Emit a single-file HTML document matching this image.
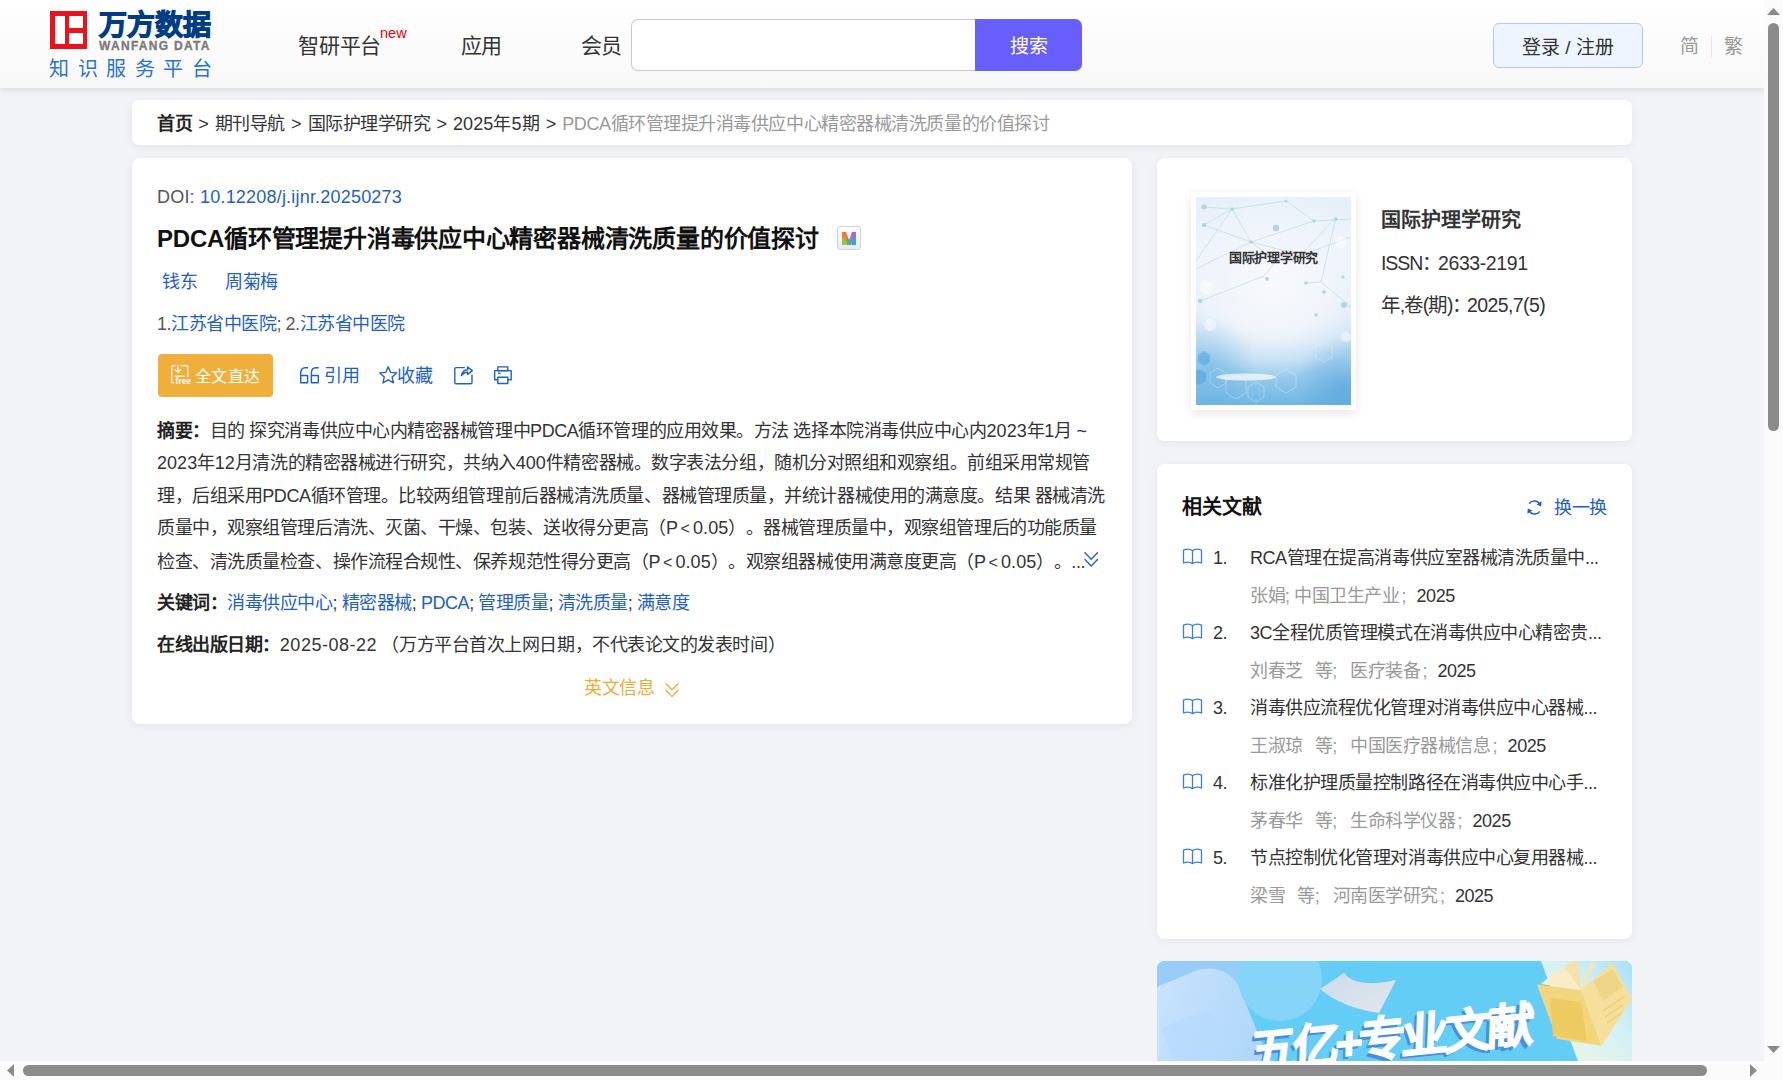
<!DOCTYPE html>
<html lang="zh-CN"><head><meta charset="utf-8">
<style>
*{box-sizing:border-box;margin:0;padding:0}
html,body{text-spacing-trim:space-all;width:1783px;height:1080px;overflow:hidden;background:#f1f3f6;font-family:"Liberation Sans",sans-serif;color:#333}
.abs{position:absolute}
.d{letter-spacing:0.05px}
.sep{display:inline-block;width:22.6px;text-align:center;letter-spacing:0}
.lt{display:inline-block;width:15.5px;text-align:center;letter-spacing:0;font-size:16px}
.nw{white-space:nowrap}
#hdr{position:absolute;left:0;top:0;width:1764px;height:88px;background:linear-gradient(#fff,#f8f8f8);box-shadow:0 2px 6px rgba(0,0,0,.1)}
.card{position:absolute;background:#fff;border-radius:8px;box-shadow:0 2px 10px rgba(20,30,50,.06)}
.blue{color:#1e60c6}
.t18{font-size:18px;line-height:24px;letter-spacing:-0.45px}
</style></head><body>

<!-- header -->
<div id="hdr">
  <!-- logo mark -->
  <div class="abs" style="left:50px;top:11px;width:37px;height:38px;background:#e8141c"></div>
  <div class="abs" style="left:54.5px;top:16px;width:10px;height:28px;background:#fff"></div>
  <div class="abs" style="left:69.3px;top:16px;width:13.4px;height:12px;background:#fff"></div>
  <div class="abs" style="left:69.3px;top:32.5px;width:13.4px;height:11.5px;background:#fff"></div>
  <div class="abs nw" style="left:99px;top:8.5px;font-size:28px;line-height:34px;font-weight:bold;color:#003d86;letter-spacing:0px;-webkit-text-stroke:1.1px #003d86">万方数据</div>
  <div class="abs nw" style="left:99px;top:39.5px;font-size:12px;line-height:13px;font-weight:bold;color:#7b7b7b;letter-spacing:1.3px;-webkit-text-stroke:0.35px #7b7b7b">WANFANG DATA</div>
  <div class="abs nw" style="left:49px;top:56px;font-size:20px;line-height:26px;color:#2a72d8;letter-spacing:8.6px">知识服务平台</div>

  <div class="abs nw" style="left:298px;top:31.5px;font-size:21px;line-height:28px;color:#333;letter-spacing:-0.2px">智研平台</div>
  <div class="abs nw" style="left:380px;top:23.5px;font-size:14.5px;line-height:18px;color:#e60012">new</div>
  <div class="abs nw" style="left:461px;top:31.5px;font-size:21px;line-height:28px;color:#333;letter-spacing:-0.6px">应用</div>
  <div class="abs nw" style="left:581px;top:31.5px;font-size:21px;line-height:28px;color:#333;letter-spacing:-0.6px">会员</div>

  <div class="abs" style="left:631px;top:19px;width:346px;height:52px;background:#fff;border:1px solid #c8c8c8;border-right:none;border-radius:7px 0 0 7px"></div>
  <div class="abs nw" style="left:975px;top:19px;width:107px;height:52px;background:#685efc;border-radius:0 7px 7px 0;color:#fff;font-size:19px;line-height:56px;text-align:center;padding-left:1px">搜索</div>

  <div class="abs nw" style="left:1493px;top:23px;width:150px;height:45px;background:#eef5fe;border:1px solid #b0c8ec;border-radius:6px;color:#333;font-size:19px;line-height:48px;text-align:center">登录 / 注册</div>
  <div class="abs nw" style="left:1680px;top:34px;font-size:19px;line-height:26px;color:#999">简</div>
  <div class="abs" style="left:1711px;top:36px;width:1px;height:21px;background:#e3e3e3"></div>
  <div class="abs nw" style="left:1724px;top:34px;font-size:19px;line-height:26px;color:#999">繁</div>
</div>

<!-- breadcrumb -->
<div class="card" style="left:132px;top:100px;width:1500px;height:45px;border-radius:7px"></div>
<div class="abs nw t18" style="left:157px;top:112px;color:#333"><b style="color:#222">首页</b><span class="sep">&gt;</span>期刊导航<span class="sep">&gt;</span>国际护理学研究<span class="sep">&gt;</span><span style="letter-spacing:0.1px">2025年5期</span><span class="sep">&gt;</span><span style="color:#999">PDCA循环管理提升消毒供应中心精密器械清洗质量的价值探讨</span></div>

<!-- main card -->
<div class="card" style="left:132px;top:158px;width:1000px;height:566px"></div>


<!-- main content -->
<div class="abs nw t18" style="left:157px;top:185px;color:#555;letter-spacing:0.2px">DOI: <span class="blue">10.12208/j.ijnr.20250273</span></div>
<div class="abs nw" style="left:157px;top:223px;font-size:24px;line-height:32px;font-weight:bold;color:#111;letter-spacing:-0.22px">PDCA循环管理提升消毒供应中心精密器械清洗质量的价值探讨</div>
<div class="abs" style="left:837px;top:226px;width:24px;height:24px;border:1px solid #d3d3d3;border-radius:3px;background:linear-gradient(#fbfcff,#e8eff9)"></div>
<svg class="abs" style="left:841px;top:231px" width="16" height="15" viewBox="0 0 16 15">
 <defs>
  <linearGradient id="gl" x1="0" y1="0" x2="0" y2="1"><stop offset="0" stop-color="#ff7410"/><stop offset="0.5" stop-color="#e99030"/><stop offset="0.65" stop-color="#8fcb2c"/><stop offset="1" stop-color="#9ccc30"/></linearGradient>
  <linearGradient id="gm" x1="0" y1="0" x2="0" y2="1"><stop offset="0" stop-color="#f08070"/><stop offset="0.6" stop-color="#9a8a80"/><stop offset="0.7" stop-color="#5aa898"/><stop offset="1" stop-color="#5aa898"/></linearGradient>
  <linearGradient id="gr" x1="0" y1="0" x2="0" y2="1"><stop offset="0" stop-color="#b060d8"/><stop offset="0.45" stop-color="#7c80e0"/><stop offset="0.6" stop-color="#44a0e8"/><stop offset="1" stop-color="#3ea2ea"/></linearGradient>
 </defs>
 <rect x="1" y="1" width="4.2" height="13" fill="url(#gl)"/>
 <path d="M5 1 L8 9 L8 14 L5.6 14 L4.4 5 Z" fill="url(#gm)"/>
 <path d="M8 9 L11 1 L11.6 5 L10.5 14 L8 14 Z" fill="url(#gm)"/>
 <rect x="10.8" y="1" width="4.2" height="13" fill="url(#gr)"/>
</svg>
<div class="abs nw t18 blue" style="left:162px;top:270px">钱东</div>
<div class="abs nw t18 blue" style="left:225px;top:270px">周菊梅</div>
<div class="abs nw t18" style="left:157px;top:312px;color:#555">1.<span class="blue">江苏省中医院</span>; 2.<span class="blue">江苏省中医院</span></div>

<div class="abs" style="left:158px;top:354px;width:115px;height:43px;background:#f0ae3a;border-radius:4px"></div>
<div class="abs nw" style="left:195px;top:364.5px;font-size:16px;line-height:24px;color:#fff;letter-spacing:0.4px">全文直达</div>

<!-- action icons -->
<svg class="abs" style="left:168px;top:362px" width="26" height="26" viewBox="0 0 26 26">
 <g fill="none" stroke="#fff" stroke-width="1.25" stroke-linecap="round" stroke-linejoin="round">
  <path d="M7 3.6 L4.7 3.6 Q3.7 3.6 3.7 4.6 L3.7 19.8 Q3.7 20.8 4.7 20.8 L5.9 20.8"/>
  <path d="M13.2 3.6 L18.8 3.6 Q19.8 3.6 19.8 4.6 L19.8 14.3"/>
  <path d="M9.9 3.4 L9.9 10.2 M6.9 7.5 L9.9 10.4 L12.9 7.5"/>
  <path d="M7.2 14 L16.3 14"/>
 </g>
 <text x="7.6" y="21.9" font-family="Liberation Sans" font-weight="bold" font-size="8.4" fill="#fff">free</text>
</svg>
<svg class="abs" style="left:298px;top:365px" width="24" height="21" viewBox="0 0 24 21">
 <g fill="none" stroke="#1e60c6" stroke-width="1.45" stroke-linejoin="round">
  <path d="M10 2.7 L7 2.7 Q3 2.9 2.7 7.5 L2.7 17.8 L9.6 17.8 L9.6 10.5 L2.7 10.5"/>
  <path d="M20.7 2.7 L17.7 2.7 Q13.7 2.9 13.4 7.5 L13.4 17.8 L20.3 17.8 L20.3 10.5 L13.4 10.5"/>
 </g>
</svg>
<svg class="abs" style="left:377px;top:364px" width="22" height="22" viewBox="0 0 22 22">
 <path d="M11.2 2.8 L13.7 8.4 L19.6 8.9 L15.1 12.9 L16.5 18.9 L11.2 15.8 L5.9 18.9 L7.3 12.9 L2.8 8.9 L8.7 8.4 Z" fill="none" stroke="#1e60c6" stroke-width="1.35" stroke-linejoin="round"/>
</svg>
<svg class="abs" style="left:452px;top:364px" width="23" height="22" viewBox="0 0 23 22">
 <g fill="none" stroke="#1e60c6" stroke-width="1.4" stroke-linejoin="round" stroke-linecap="round">
  <path d="M12.3 3.6 L4 3.6 Q2.8 3.6 2.8 4.8 L2.8 18.6 Q2.8 19.8 4 19.8 L18.8 19.8 Q20 19.8 20 18.6 L20 11"/>
  <path d="M9.3 11.6 Q10.5 6.2 15.6 5.8 L15.6 3 L20.3 6.6 L15.6 10.4 L15.6 8.2 Q11.8 8.3 9.3 11.6 Z"/>
 </g>
</svg>
<svg class="abs" style="left:492px;top:364px" width="22" height="22" viewBox="0 0 22 22">
 <g fill="none" stroke="#1e60c6" stroke-width="1.4" stroke-linejoin="round">
  <rect x="5.8" y="2.9" width="10" height="3.8"/>
  <path d="M5.8 15.8 L2.7 15.8 L2.7 6.6 L19.2 6.6 L19.2 15.8 L16 15.8"/>
  <rect x="5.8" y="13.2" width="10" height="6.3"/>
  <path d="M6 9.2 L8.6 9.2"/>
 </g>
</svg>
<div class="abs nw t18 blue" style="left:324px;top:364px">引用</div>
<div class="abs nw t18 blue" style="left:397px;top:364px">收藏</div>

<div class="abs nw" style="left:157px;top:415px;font-size:18px;letter-spacing:-0.45px;line-height:32.4px;color:#333">
<div><b style="color:#222">摘要：</b>目的 探究消毒供应中心内精密器械管理中PDCA循环管理的应用效果。方法 选择本院消毒供应中心内<span class="d">2023</span>年<span class="d">1</span>月 ~</div>
<div><span class="d">2023</span>年<span class="d">12</span>月清洗的精密器械进行研究，共纳入<span class="d">400</span>件精密器械。数字表法分组，随机分对照组和观察组。前组采用常规管</div>
<div>理，后组采用PDCA循环管理。比较两组管理前后器械清洗质量、器械管理质量，并统计器械使用的满意度。结果 器械清洗</div>
<div>质量中，观察组管理后清洗、灭菌、干燥、包装、送收得分更高（P<span class="lt">&lt;</span><span class="d">0.05</span>）。器械管理质量中，观察组管理后的功能质量</div>
<div>检查、清洗质量检查、操作流程合规性、保养规范性得分更高（P<span class="lt">&lt;</span><span class="d">0.05</span>）。观察组器械使用满意度更高（P<span class="lt">&lt;</span><span class="d">0.05</span>）。...</div>
</div>
<div class="abs nw t18" style="left:157px;top:591px"><b style="color:#222">关键词：</b><span class="blue">消毒供应中心</span>; <span class="blue">精密器械</span>; <span class="blue">PDCA</span>; <span class="blue">管理质量</span>; <span class="blue">清洗质量</span>; <span class="blue">满意度</span></div>
<div class="abs nw t18" style="left:157px;top:633px"><b style="color:#222">在线出版日期：</b><span style="letter-spacing:0.5px">2025-08-22</span> （万方平台首次上网日期，不代表论文的发表时间）</div>
<div class="abs nw t18" style="left:584px;top:676px;color:#efab38">英文信息</div>
<svg class="abs" style="left:1083px;top:551px" width="17" height="17" viewBox="0 0 17 17"><path d="M1.9 1.8 L8.2 8.2 L14.5 1.8 M1.9 8.6 L8.2 15 L14.5 8.6" fill="none" stroke="#1e60c6" stroke-width="1.4" stroke-linecap="round"/></svg>
<svg class="abs" style="left:664px;top:681.5px" width="16" height="17" viewBox="0 0 16 17"><path d="M1.8 1.8 L8 7.8 L14.2 1.8 M1.8 8.2 L8 14.6 L14.2 8.2" fill="none" stroke="#efab38" stroke-width="1.3" stroke-linecap="round"/></svg>


<!-- right card 1 -->
<div class="card" style="left:1157px;top:158px;width:475px;height:283px"></div>

<!-- right card 2 -->
<div class="card" style="left:1157px;top:464px;width:475px;height:475px"></div>


<!-- right card 1 content -->
<div class="abs" style="left:1191px;top:192px;width:165px;height:218px;background:#fff;box-shadow:0 3px 10px rgba(0,0,0,.10)"></div>
<div class="abs" id="cover" style="left:1196px;top:197px;width:155px;height:208px;overflow:hidden;background:radial-gradient(ellipse 70% 45% at 50% 42%,#f8f9fd 0%,#f1f5fb 50%,rgba(240,245,251,0) 100%),linear-gradient(180deg,#e6f0f8 0%,#eef3fa 30%,#dbeaf6 55%,#a9d3ef 80%,#6fb6e3 100%)">
<div style="position:absolute;left:-30px;top:120px;width:90px;height:110px;background:radial-gradient(closest-side,rgba(90,170,225,.42),rgba(90,170,225,0))"></div>
<div style="position:absolute;left:100px;top:140px;width:90px;height:100px;background:radial-gradient(closest-side,rgba(70,150,215,.48),rgba(70,150,215,0))"></div>
<svg width="155" height="208" style="position:absolute;left:0;top:0">
 <g stroke="#a8d2dc" stroke-width="0.6" fill="none" opacity="0.8">
  <path d="M8 10 L36 12 L55 45 L118 24 L155 22"/>
  <path d="M8 28 L36 12 L90 4 L118 24"/>
  <path d="M8 28 L55 45 L80 64 L105 58 L155 40"/>
  <path d="M0 72 L55 45 L105 58 L140 20"/>
  <path d="M4 104 L68 79 L80 64"/>
  <path d="M110 86 L125 85 L140 20"/>
  <path d="M125 85 L155 110"/>
  <path d="M36 12 L0 64"/>
 </g>
 <g fill="#9fcfdb" opacity="0.75">
  <circle cx="8" cy="10" r="2.6"/><circle cx="36" cy="12" r="1.8"/><circle cx="8" cy="28" r="2.2"/>
  <circle cx="55" cy="45" r="1.8"/><circle cx="80" cy="31" r="3.2"/><circle cx="118" cy="24" r="1.8"/>
  <circle cx="140" cy="22" r="1.8"/><circle cx="70" cy="57" r="1.6"/><circle cx="71" cy="82" r="2"/>
  <circle cx="110" cy="86" r="1.8"/><circle cx="128" cy="95" r="2"/><circle cx="147" cy="80" r="1.8"/>
  <circle cx="4" cy="104" r="2.2"/><circle cx="148" cy="108" r="3"/><circle cx="90" cy="4" r="1.6"/><circle cx="120" cy="118" r="1.8"/>
 </g>
 <g fill="#ffffff" opacity="0.5">
  <circle cx="145" cy="45" r="6"/><circle cx="10" cy="90" r="7"/><circle cx="150" cy="140" r="5"/><circle cx="14" cy="128" r="6"/>
 </g>
 <g fill="#4fa0dc" opacity="0.5">
  <polygon points="2,158 8,154 14,158 14,165 8,169 2,165"/>
  <polygon points="-4,176 3,172 10,176 10,184 3,188 -4,184"/>
 </g>
 <g stroke="#ffffff" stroke-width="0.7" fill="none" opacity="0.45">
  <polygon points="14,176 22,171 30,176 30,186 22,191 14,186"/>
  <polygon points="30,184 40,178 50,184 50,196 40,202 30,196"/>
  <polygon points="80,178 90,172 100,178 100,190 90,196 80,190"/>
  <polygon points="52,190 60,185 68,190 68,200 60,205 52,200"/>
  <polygon points="120,150 128,145 136,150 136,160 128,165 120,160"/>
 </g>
 <ellipse cx="50" cy="180" rx="30" ry="3.5" fill="#ffffff" opacity="0.7"/>
</svg>
</div>
<div class="abs nw" style="left:1229px;top:248px;font-size:13px;line-height:20px;font-weight:bold;color:#333;letter-spacing:-0.3px">国际护理学研究</div>

<div class="abs nw" style="left:1381px;top:206px;font-size:20px;line-height:28px;font-weight:bold;color:#333">国际护理学研究</div>
<div class="abs nw" style="left:1381px;top:249px;font-size:19.5px;line-height:28px;color:#333"><span style="letter-spacing:-1.1px">ISSN</span>：</div><div class="abs nw" style="left:1438px;top:249px;font-size:19.5px;line-height:28px;color:#333;letter-spacing:-0.4px">2633-2191</div>
<div class="abs nw" style="left:1381px;top:291px;font-size:19.5px;line-height:28px;color:#333;letter-spacing:-1.2px">年,卷(期)<span style="letter-spacing:0">：</span></div><div class="abs nw" style="left:1467px;top:291px;font-size:19.5px;line-height:28px;color:#333;letter-spacing:-0.6px">2025,7(5)</div>

<!-- right card 2 content -->
<div class="abs nw" style="left:1182px;top:493px;font-size:20px;line-height:28px;font-weight:bold;color:#111">相关文献</div>
<div class="abs nw t18 blue" style="left:1554px;top:496px">换一换</div>
<svg class="abs" style="left:1182px;top:548px" width="21" height="17" viewBox="0 0 21 17"><path d="M1.5 2.2 C4.5 0.8 7.8 0.8 10.5 2.6 C13.2 0.8 16.5 0.8 19.5 2.2 L19.5 15 C16.5 13.8 13.2 13.8 10.5 15.6 C7.8 13.8 4.5 13.8 1.5 15 Z M10.5 2.6 L10.5 15.6" fill="none" stroke="#3b7ddd" stroke-width="1.3" stroke-linejoin="round"/></svg>
<div class="abs nw t18" style="left:1213px;top:546px;color:#333">1.</div>
<div class="abs nw t18" style="left:1250px;top:546px;color:#333">RCA管理在提高消毒供应室器械清洗质量中...</div>
<div class="abs nw t18" style="left:1250px;top:584px;color:#999"><span>张娟;&nbsp;中国卫生产业</span><span style="display:inline-block;width:17px;padding-left:2px">;</span><span style="color:#333">2025</span></div>
<svg class="abs" style="left:1182px;top:623px" width="21" height="17" viewBox="0 0 21 17"><path d="M1.5 2.2 C4.5 0.8 7.8 0.8 10.5 2.6 C13.2 0.8 16.5 0.8 19.5 2.2 L19.5 15 C16.5 13.8 13.2 13.8 10.5 15.6 C7.8 13.8 4.5 13.8 1.5 15 Z M10.5 2.6 L10.5 15.6" fill="none" stroke="#3b7ddd" stroke-width="1.3" stroke-linejoin="round"/></svg>
<div class="abs nw t18" style="left:1213px;top:621px;color:#333">2.</div>
<div class="abs nw t18" style="left:1250px;top:621px;color:#333">3C全程优质管理模式在消毒供应中心精密贵...</div>
<div class="abs nw t18" style="left:1250px;top:659px;color:#999"><span style="display:inline-block;width:64.7px">刘春芝</span><span style="display:inline-block;width:35.5px">等;</span><span>医疗装备</span><span style="display:inline-block;width:17px;padding-left:2px">;</span><span style="color:#333">2025</span></div>
<svg class="abs" style="left:1182px;top:698px" width="21" height="17" viewBox="0 0 21 17"><path d="M1.5 2.2 C4.5 0.8 7.8 0.8 10.5 2.6 C13.2 0.8 16.5 0.8 19.5 2.2 L19.5 15 C16.5 13.8 13.2 13.8 10.5 15.6 C7.8 13.8 4.5 13.8 1.5 15 Z M10.5 2.6 L10.5 15.6" fill="none" stroke="#3b7ddd" stroke-width="1.3" stroke-linejoin="round"/></svg>
<div class="abs nw t18" style="left:1213px;top:696px;color:#333">3.</div>
<div class="abs nw t18" style="left:1250px;top:696px;color:#333">消毒供应流程优化管理对消毒供应中心器械...</div>
<div class="abs nw t18" style="left:1250px;top:734px;color:#999"><span style="display:inline-block;width:64.7px">王淑琼</span><span style="display:inline-block;width:35.5px">等;</span><span>中国医疗器械信息</span><span style="display:inline-block;width:17px;padding-left:2px">;</span><span style="color:#333">2025</span></div>
<svg class="abs" style="left:1182px;top:773px" width="21" height="17" viewBox="0 0 21 17"><path d="M1.5 2.2 C4.5 0.8 7.8 0.8 10.5 2.6 C13.2 0.8 16.5 0.8 19.5 2.2 L19.5 15 C16.5 13.8 13.2 13.8 10.5 15.6 C7.8 13.8 4.5 13.8 1.5 15 Z M10.5 2.6 L10.5 15.6" fill="none" stroke="#3b7ddd" stroke-width="1.3" stroke-linejoin="round"/></svg>
<div class="abs nw t18" style="left:1213px;top:771px;color:#333">4.</div>
<div class="abs nw t18" style="left:1250px;top:771px;color:#333">标准化护理质量控制路径在消毒供应中心手...</div>
<div class="abs nw t18" style="left:1250px;top:809px;color:#999"><span style="display:inline-block;width:64.7px">茅春华</span><span style="display:inline-block;width:35.5px">等;</span><span>生命科学仪器</span><span style="display:inline-block;width:17px;padding-left:2px">;</span><span style="color:#333">2025</span></div>
<svg class="abs" style="left:1182px;top:848px" width="21" height="17" viewBox="0 0 21 17"><path d="M1.5 2.2 C4.5 0.8 7.8 0.8 10.5 2.6 C13.2 0.8 16.5 0.8 19.5 2.2 L19.5 15 C16.5 13.8 13.2 13.8 10.5 15.6 C7.8 13.8 4.5 13.8 1.5 15 Z M10.5 2.6 L10.5 15.6" fill="none" stroke="#3b7ddd" stroke-width="1.3" stroke-linejoin="round"/></svg>
<div class="abs nw t18" style="left:1213px;top:846px;color:#333">5.</div>
<div class="abs nw t18" style="left:1250px;top:846px;color:#333">节点控制优化管理对消毒供应中心复用器械...</div>
<div class="abs nw t18" style="left:1250px;top:884px;color:#999"><span style="display:inline-block;width:47.1px">梁雪</span><span style="display:inline-block;width:35.5px">等;</span><span>河南医学研究</span><span style="display:inline-block;width:17px;padding-left:2px">;</span><span style="color:#333">2025</span></div>
<svg class="abs" style="left:1526px;top:498.5px" width="17" height="17" viewBox="0 0 17 17"><path d="M14.2 6.2 A6.2 6.2 0 0 0 3.2 4.6" fill="none" stroke="#1e60c6" stroke-width="1.5"/><path d="M2.8 10.8 A6.2 6.2 0 0 0 13.8 12.4" fill="none" stroke="#1e60c6" stroke-width="1.5"/><path d="M15.6 2.2 L15.2 7.4 L10.6 5.6 Z" fill="#1e60c6"/><path d="M1.4 14.8 L1.8 9.6 L6.4 11.4 Z" fill="#1e60c6"/></svg>

<!-- banner -->
<div class="abs" style="left:1157px;top:961px;width:475px;height:100px;border-radius:8px 8px 0 0;background:#64cdf6;overflow:hidden">
<svg width="475" height="100" style="position:absolute;left:0;top:0">
 <defs>
  <linearGradient id="bl" x1="0" y1="0" x2="1" y2="1"><stop offset="0" stop-color="#cfe6fd"/><stop offset="1" stop-color="#a9d4fa"/></linearGradient>
  <linearGradient id="br" x1="0" y1="1" x2="1" y2="0"><stop offset="0" stop-color="#f2f8e2"/><stop offset="0.6" stop-color="#d4f0f4"/><stop offset="1" stop-color="#a8e0f8"/></linearGradient>
  <linearGradient id="pp" x1="0" y1="0" x2="1" y2="1"><stop offset="0" stop-color="#c9dcea"/><stop offset="1" stop-color="#e4e6ee"/></linearGradient>
 </defs>
 <ellipse cx="25" cy="8" rx="80" ry="38" fill="#98cdfa"/>
 <g transform="rotate(-22 45 70)"><rect x="-22" y="12" width="118" height="130" rx="34" fill="url(#bl)"/><rect x="8" y="52" width="52" height="62" rx="4" fill="#b6dafb" opacity="0.6"/></g>
 <circle cx="123" cy="18" r="42" fill="#84d5f7"/>
 <path d="M163 28 L187 12 Q200 28 239 19 L222 52 Q186 47 163 28 Z" fill="url(#pp)"/>
 <polygon points="384,0 475,0 475,100 421,100" fill="url(#br)"/>
 <polygon points="380,23.5 424,29 444.6,84.7 400,78" fill="#f3d57e"/>
 <polygon points="393,37 424,41 430,80 396,75" fill="#eecb62"/>
 <polygon points="424,29 455.6,2 474.8,38 444.6,84.7" fill="#f6df9a"/>
 <polygon points="436,20 456,8 466,26 446,40" fill="#efd587"/>
 <g stroke="#ecd183" stroke-width="1.6"><path d="M446 50 L468 35 M448 56 L466 44 M450 62 L464 52"/></g>
 <path d="M384 23 Q396 12 407.5 5.7 Q418 14 424 29 Z" fill="#f9edc8"/>
 <path d="M424 29 Q428 12 435 1.5 L440 0 Q432 14 426 29 Z" fill="#f6e6b6"/>
 <path d="M407 6 Q414 0 420 -2 Q424 12 424 29 Z" fill="#f4e2ae"/>
</svg>
<div class="nw" style="position:absolute;left:94px;top:64px;font-size:47px;line-height:56px;font-weight:bold;color:#fbfcff;letter-spacing:-4px;transform:rotate(-5.8deg) skewX(-8deg);transform-origin:0 0;text-shadow:-3px 3px 0 #4a8edb;-webkit-text-stroke:1.5px #fbfcff">五亿+专业文献</div>
</div>

<!-- scrollbars -->
<div class="abs" style="left:1764px;top:0;width:19px;height:1080px;background:#fbfbfb"></div>
<div class="abs" style="left:0;top:1061px;width:1783px;height:19px;background:#fbfbfb"></div>
<div class="abs" style="left:1768px;top:23px;width:11px;height:408px;border-radius:6px;background:#8b8b8b"></div>
<div class="abs" style="left:23px;top:1065px;width:1684px;height:11px;border-radius:6px;background:#8b8b8b"></div>
<svg class="abs" style="left:0;top:0" width="1783" height="1080">
  <polygon points="1767,15 1780,15 1773.5,8" fill="#8b8b8b"/>
  <polygon points="1767,1046 1780,1046 1773.5,1053" fill="#8b8b8b"/>
  <polygon points="14,1064 14,1077 7,1070.5" fill="#8b8b8b"/>
  <polygon points="1750,1064 1750,1077 1757,1070.5" fill="#8b8b8b"/>
</svg>
</body></html>
